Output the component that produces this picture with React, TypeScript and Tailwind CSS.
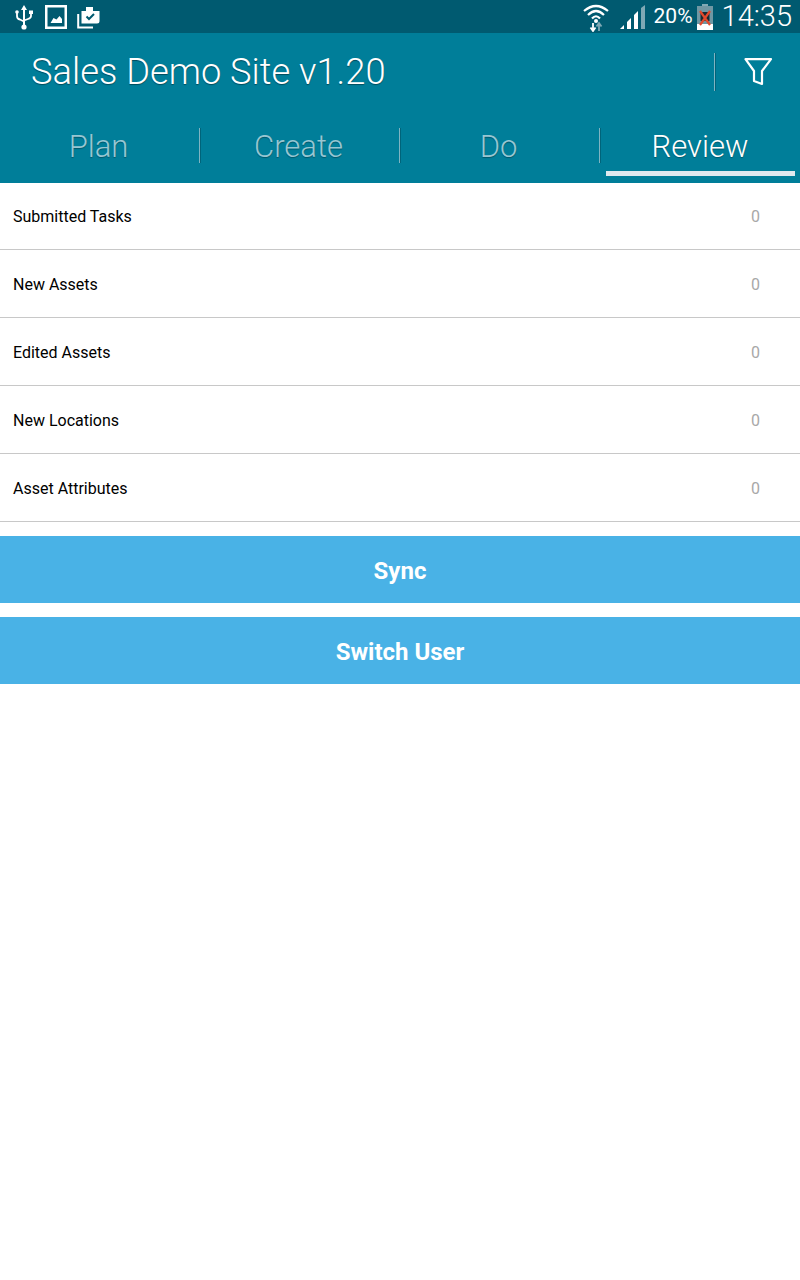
import React from 'react';

const rows = ['Submitted Tasks', 'New Assets', 'Edited Assets', 'New Locations', 'Asset Attributes'];
const tabs = ['Plan', 'Create', 'Do', 'Review'];

const StatusBar = () => (
  <div className="h-[33px] bg-[#005a70] flex items-center text-white">
    <div className="flex items-center pl-[14px]">
      <svg width="20" height="26" viewBox="0 0 20 26" fill="none" className="mr-[11px]">
        <path d="M10 1 L13 6 H11 V22 H9 V6 H7 Z" fill="#fff" />
        <circle cx="10" cy="23" r="2.6" fill="#fff" />
        <path d="M3 9 V12 Q3 15 6 15.5 L10 17.5 M17 9 V12 Q17 14 14 15 L10 16.5" stroke="#fff" strokeWidth="1.8" />
        <circle cx="3" cy="8" r="1.8" fill="#fff" />
        <rect x="15" y="6.5" width="4" height="3.5" fill="#fff" />
      </svg>
      <svg width="22" height="24" viewBox="0 0 22 24" fill="none" className="mr-[10px]">
        <rect x="1.25" y="1.25" width="19.5" height="21.5" stroke="#fff" strokeWidth="2.5" />
        <path d="M5.5 18 L8.5 13 L11.5 14.5 L14.5 11 L17 14 V18 Z" fill="#fff" />
      </svg>
      <svg width="23" height="24" viewBox="0 0 23 24" fill="none">
        <path d="M1.2 9 V22.5 H16" stroke="#fff" strokeWidth="2" />
        <path d="M4.5 6 H9 V2 H16 V6 H22.5 V16 Q22.5 18.5 20 18.5 H4.5 Z" fill="#fff" />
        <path d="M9.5 11.5 L12 14 L17 9" stroke="#005a70" strokeWidth="2" />
      </svg>
    </div>
    <div className="ml-auto flex items-center pr-[8px]">
      <svg width="28" height="30" viewBox="0 0 28 30" fill="none" className="mr-[10px]">
        <path d="M2 9 Q14 -1 26 9" stroke="#fff" strokeWidth="2.2" />
        <path d="M6 13 Q14 5 22 13" stroke="#fff" strokeWidth="2.2" />
        <path d="M10 16.5 Q14 12 18 16.5" stroke="#fff" strokeWidth="2.2" />
        <circle cx="14" cy="19" r="2" fill="#fff" />
        <path d="M11 21 V28 M8.5 25.5 L11 29 L13.5 25.5" stroke="#fff" strokeWidth="1.8" />
        <path d="M17 29 V21 M14.5 24.5 L17 21 L19.5 24.5" stroke="#7fa9b5" strokeWidth="1.8" />
      </svg>
      <svg width="27" height="24" viewBox="0 0 27 24" className="mr-[7px]">
        <path d="M0 24 L4 20 V24 Z" fill="#fff" />
        <path d="M7 24 V17 L11 13 V24 Z" fill="#fff" />
        <path d="M14 24 V10 L18 6 V24 Z" fill="#fff" />
        <path d="M21 24 V3 L25 0 V24 Z" fill="#7fa9b5" />
      </svg>
      <span className="font-['Roboto',sans-serif] text-[21px] leading-none">20%</span>
      <svg width="16" height="26" viewBox="0 0 16 26" className="ml-[4px] mr-[9px]">
        <rect x="5" y="0" width="6" height="3" fill="#7fa9b5" />
        <rect x="0" y="2" width="16" height="24" fill="#6f97a3" />
        <rect x="0" y="20" width="16" height="6" fill="#fff" />
        <rect x="3.5" y="8" width="9" height="9" fill="#1c2a30" />
        <path d="M3 7 L13 21 M13 7 L3 21" stroke="#e2492c" strokeWidth="2.2" />
      </svg>
      <span className="font-['Roboto',sans-serif] font-light text-[29px] leading-none">14:35</span>
    </div>
  </div>
);

export default function App() {
  return (
    <div className="min-h-[1280px] bg-white font-['Roboto',sans-serif]">
      <StatusBar />
      <div className="h-[150px] bg-[#007e99] flex flex-col">
        <div className="h-[77px] flex items-center pl-[31px]">
          <span className="text-white font-light text-[36.3px] leading-none pt-[2px] [text-shadow:0_1px_1px_rgba(0,0,0,0.4)]">Sales Demo Site v1.20</span>
          <div className="ml-auto flex items-center">
            <div className="w-px h-[38px] bg-[#7fb4c2] shadow-[1px_0_0_#00647a]" />
            <svg width="30" height="30" viewBox="0 0 30 30" fill="none" className="ml-[28px] mr-[27px]">
              <path d="M2.5 2.2 H28 L19 14 V27 L11 24 V14 Z" stroke="#fff" strokeWidth="2.2" strokeLinejoin="round" />
            </svg>
          </div>
        </div>
        <div className="flex h-[73px]">
          {tabs.map((tab, i) => (
            <div key={tab} className="relative w-[200px] flex items-center justify-center">
              <span className={`font-light text-[31px] leading-none [text-shadow:0_1px_1px_rgba(0,0,0,0.3)] ${tab === 'Review' ? 'text-white' : 'text-[#97c6d2] pr-[3px]'}`}>{tab}</span>
              {i < 3 && <div className="absolute right-0 top-[18px] w-px h-[35px] bg-[#7fb4c2] shadow-[1px_0_0_#00647a]" />}
              {tab === 'Review' && <div className="absolute left-[6px] right-[5px] top-[61px] h-[5px] bg-[#dfe9ef]" />}
            </div>
          ))}
        </div>
      </div>
      <div>
        {rows.map((row, i) => (
          <div key={row} className={`flex items-center justify-between border-b border-[#c8c8c8] pl-[13px] pr-[40px] pt-[2px] ${i === 0 ? 'h-[67px]' : 'h-[68px]'}`}>
            <span className="text-[16px] text-black">{row}</span>
            <span className="text-[16px] text-[#a8a8a8]">0</span>
          </div>
        ))}
      </div>
      <div className="pt-[14px] flex flex-col gap-[14px]">
        <button className="h-[67px] pt-[2px] bg-[#49b2e6] text-white font-bold text-[24px]">Sync</button>
        <button className="h-[67px] pt-[2px] bg-[#49b2e6] text-white font-bold text-[24px]">Switch User</button>
      </div>
    </div>
  );
}
